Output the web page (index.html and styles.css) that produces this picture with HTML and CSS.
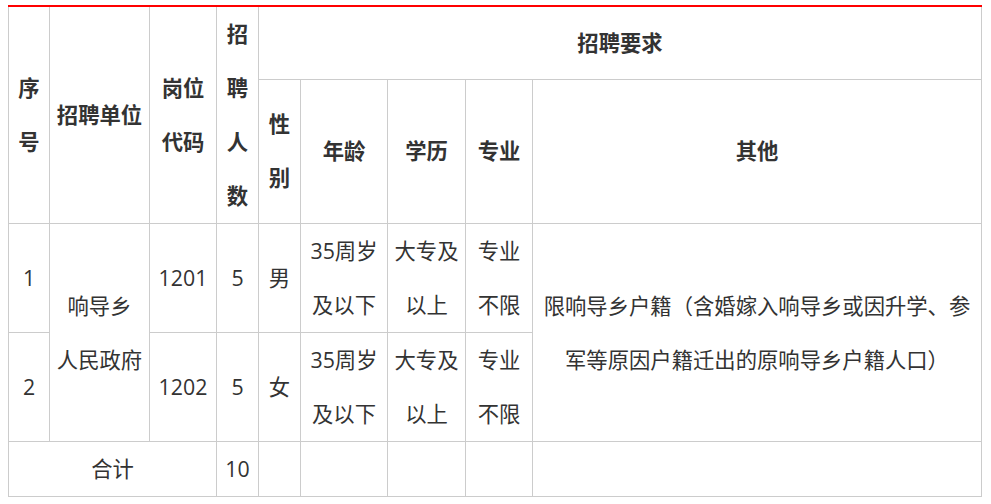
FILE: index.html
```html
<!DOCTYPE html>
<html lang="zh-CN">
<head>
<meta charset="utf-8">
<title>招聘要求</title>
<link rel="stylesheet" href="styles.css">
</head>
<body>
<table class="jobs">
  <colgroup>
    <col class="c-no">
    <col class="c-unit">
    <col class="c-code">
    <col class="c-num">
    <col class="c-sex">
    <col class="c-age">
    <col class="c-edu">
    <col class="c-major">
    <col class="c-other">
  </colgroup>
  <thead>
    <tr class="row-head1">
      <th rowspan="2">序<br>号</th>
      <th rowspan="2">招聘单位</th>
      <th rowspan="2">岗位<br>代码</th>
      <th rowspan="2">招<br>聘<br>人<br>数</th>
      <th colspan="5">招聘要求</th>
    </tr>
    <tr class="row-head2">
      <th>性<br>别</th>
      <th>年龄</th>
      <th>学历</th>
      <th>专业</th>
      <th>其他</th>
    </tr>
  </thead>
  <tbody>
    <tr class="row-data">
      <td>1</td>
      <td rowspan="2">响导乡<br>人民政府</td>
      <td>1201</td>
      <td>5</td>
      <td>男</td>
      <td>35周岁<br>及以下</td>
      <td>大专及<br>以上</td>
      <td>专业<br>不限</td>
      <td rowspan="2" class="other">限响导乡户籍（含婚嫁入响导乡或因升学、参军等原因户籍迁出的原响导乡户籍人口）</td>
    </tr>
    <tr class="row-data">
      <td>2</td>
      <td>1202</td>
      <td>5</td>
      <td>女</td>
      <td>35周岁<br>及以下</td>
      <td>大专及<br>以上</td>
      <td>专业<br>不限</td>
    </tr>
    <tr class="row-total">
      <td colspan="3">合计</td>
      <td>10</td>
      <td></td>
      <td></td>
      <td></td>
      <td></td>
      <td></td>
    </tr>
  </tbody>
</table>
</body>
</html>
```
FILE: styles.css
```css
html, body {
  background: #fff;
}
body {
  margin: 5px 8px 0 8px;
  font-family: "Open Sans", "Noto Sans CJK SC", sans-serif;
  color: #333;
}
.jobs {
  border-collapse: collapse;
  table-layout: fixed;
  width: 974px;
  border-top: 2px solid #f00;
  font-size: 21.33px;
  line-height: 54px;
}
.jobs th,
.jobs td {
  border: 1px solid #ccc;
  padding: 0;
  text-align: center;
  vertical-align: middle;
  color: #333;
}
.jobs th {
  font-weight: bold;
}
.jobs td {
  font-weight: normal;
}
.jobs td.other {
  padding: 0 8px;
}
.c-no { width: 41px; }
.c-unit { width: 100px; }
.c-code { width: 67px; }
.c-num { width: 42px; }
.c-sex { width: 42px; }
.c-age { width: 87px; }
.c-edu { width: 78px; }
.c-major { width: 67px; }
.c-other { width: 449px; }
.row-head1 { height: 73px; }
.row-head2 { height: 144px; }
.row-data { height: 109px; }
.row-total { height: 55px; }
```
